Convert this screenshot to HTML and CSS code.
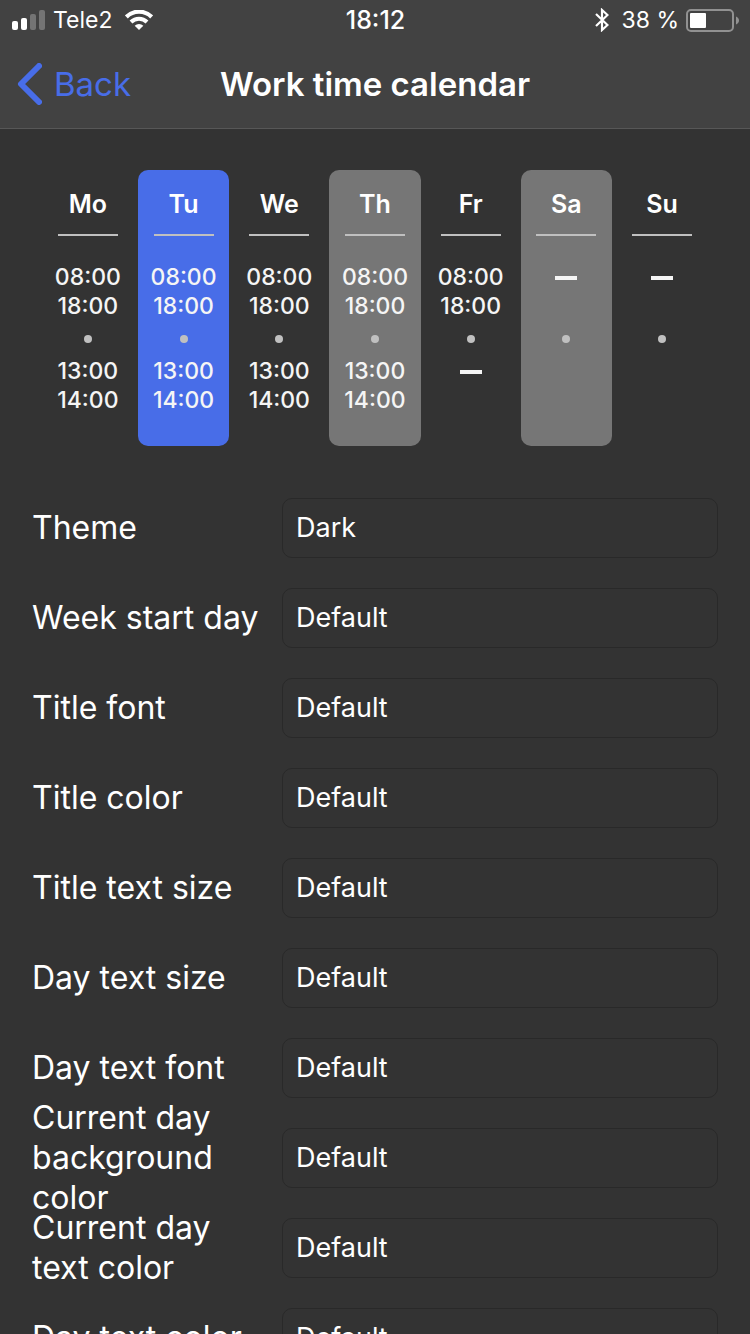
FILE: index.html
```html
<!DOCTYPE html>
<html lang="en">
<head>
<meta charset="utf-8">
<meta name="viewport" content="width=device-width, initial-scale=1">
<title>Work time calendar</title>
<link rel="stylesheet" href="styles.css">
</head>
<body>
<div class="app">
  <header class="header">
    <div class="status">
      <div class="status-side">
        <svg class="signal" viewBox="0 0 34 20" width="34" height="20" aria-hidden="true">
          <rect x="0" y="11" width="6" height="9" rx="2" fill="#fff"/>
          <rect x="9" y="8" width="6" height="12" rx="2" fill="#fff"/>
          <rect x="18" y="4" width="6" height="16" rx="2" fill="#747474"/>
          <rect x="27" y="0" width="6" height="20" rx="2" fill="#747474"/>
        </svg>
        <span class="carrier">Tele2</span>
        <svg class="wifi" viewBox="0 0 28 20" width="28" height="20" aria-hidden="true">
          <path d="M1.300 6.900a18 18 0 0 1 25.400 0" fill="none" stroke="#fff" stroke-width="4.200"/>
          <path d="M6 12a11.400 11.400 0 0 1 16 0" fill="none" stroke="#fff" stroke-width="4"/>
          <path d="M14 20l-4.300-4.300a6.100 6.100 0 0 1 8.600 0z" fill="#fff"/>
        </svg>
      </div>
      <time class="clock">18:12</time>
      <div class="status-side status-right">
        <svg class="bluetooth" viewBox="0 0 14 24" width="14" height="24" aria-hidden="true">
          <path d="M1 6l11.500 11-5.500 5V2L12.500 7 1 18" fill="none" stroke="#fff" stroke-width="2.200"/>
        </svg>
        <span>38 %</span>
        <svg class="battery" viewBox="0 0 53 24" width="53" height="24" aria-hidden="true">
          <rect x="1" y="2" width="46" height="21" rx="4" fill="none" stroke="#919191" stroke-width="2"/>
          <rect x="4" y="5" width="16" height="15" rx="1" fill="#fff"/>
          <path d="M50 8.500c4 1.500 4 6.500 0 8z" fill="#919191"/>
        </svg>
      </div>
    </div>
    <nav class="nav">
      <button class="back" type="button">
        <svg viewBox="0 0 25 42" width="25" height="42" aria-hidden="true">
          <path d="M22 3L4 21l18 18" fill="none" stroke="#486de8" stroke-width="6" stroke-linecap="round" stroke-linejoin="round"/>
        </svg>
        <span>Back</span>
      </button>
      <h1 class="title">Work time calendar</h1>
    </nav>
  </header>

  <main class="content">
    <section class="week" aria-label="Week preview">
      <div class="day">
        <h2 class="day-name">Mo</h2>
        <div class="slot">08:00<br>18:00</div>
        <span class="dot"></span>
        <div class="slot">13:00<br>14:00</div>
      </div>
      <div class="day day-current">
        <h2 class="day-name">Tu</h2>
        <div class="slot">08:00<br>18:00</div>
        <span class="dot"></span>
        <div class="slot">13:00<br>14:00</div>
      </div>
      <div class="day">
        <h2 class="day-name">We</h2>
        <div class="slot">08:00<br>18:00</div>
        <span class="dot"></span>
        <div class="slot">13:00<br>14:00</div>
      </div>
      <div class="day day-alt">
        <h2 class="day-name">Th</h2>
        <div class="slot">08:00<br>18:00</div>
        <span class="dot"></span>
        <div class="slot">13:00<br>14:00</div>
      </div>
      <div class="day">
        <h2 class="day-name">Fr</h2>
        <div class="slot">08:00<br>18:00</div>
        <span class="dot"></span>
        <div class="slot"><span class="dash"></span></div>
      </div>
      <div class="day day-alt">
        <h2 class="day-name">Sa</h2>
        <div class="slot"><span class="dash"></span></div>
        <span class="dot"></span>
        <div class="slot"></div>
      </div>
      <div class="day">
        <h2 class="day-name">Su</h2>
        <div class="slot"><span class="dash"></span></div>
        <span class="dot"></span>
        <div class="slot"></div>
      </div>
    </section>

    <form class="settings">
      <label class="label" for="theme">Theme</label>
      <select class="field" id="theme"><option>Dark</option></select>
      <label class="label" for="week-start">Week start day</label>
      <select class="field" id="week-start"><option>Default</option></select>
      <label class="label" for="title-font">Title font</label>
      <select class="field" id="title-font"><option>Default</option></select>
      <label class="label" for="title-color">Title color</label>
      <select class="field" id="title-color"><option>Default</option></select>
      <label class="label" for="title-size">Title text size</label>
      <select class="field" id="title-size"><option>Default</option></select>
      <label class="label" for="day-size">Day text size</label>
      <select class="field" id="day-size"><option>Default</option></select>
      <label class="label" for="day-font">Day text font</label>
      <select class="field" id="day-font"><option>Default</option></select>
      <label class="label" for="current-bg">Current day background color</label>
      <select class="field" id="current-bg"><option>Default</option></select>
      <label class="label" for="current-color">Current day text color</label>
      <select class="field" id="current-color"><option>Default</option></select>
      <label class="label" for="day-color">Day text color</label>
      <select class="field" id="day-color"><option>Default</option></select>
    </form>
  </main>
</div>
</body>
</html>
```

FILE: styles.css
```css
* {
  box-sizing: border-box;
}

body {
  margin: 0;
  background: #333;
  color: #fff;
  font-family: Inter, "Liberation Sans", sans-serif;
}

.app {
  display: flex;
  flex-direction: column;
  height: 100vh;
}

.header {
  background: #424242;
  border-bottom: 1px solid #575757;
}

.status {
  display: grid;
  grid-template-columns: 1fr auto 1fr;
  align-items: center;
  height: 40px;
  padding: 0 11px 0 12px;
  font-size: 23px;
}

.status-side {
  display: flex;
  align-items: center;
  gap: 7px;
}

.carrier {
  margin-right: 6px;
}

.status-right {
  justify-content: flex-end;
}

.bluetooth {
  margin-right: 6px;
}

.clock {
  font-size: 25px;
  font-weight: 500;
}

.nav {
  display: grid;
  grid-template-columns: 1fr auto 1fr;
  align-items: center;
  height: 88px;
  padding: 0 17px;
}

.back {
  display: flex;
  align-items: center;
  justify-self: start;
  gap: 12px;
  padding: 0;
  border: 0;
  background: none;
  color: #486de8;
  font: 400 33px/40px Inter, "Liberation Sans", sans-serif;
}

.title {
  margin: 0;
  font-size: 33px;
  font-weight: 600;
  line-height: 40px;
}

.content {
  flex: 1;
  min-height: 0;
  overflow-y: auto;
  scrollbar-width: none;
}

.week {
  display: grid;
  grid-template-columns: repeat(7, 1fr);
  gap: 4px;
  padding: 41px 42px 52px;
}

.day {
  display: flex;
  flex-direction: column;
  align-items: center;
  padding: 18px 0 31px;
  border-radius: 10px;
}

.day-current {
  background: #486de8;
}

.day-alt {
  background: #767676;
}

.day-name {
  width: 60px;
  margin: 0 0 27px;
  padding-bottom: 14px;
  border-bottom: 2px solid #c0c0c0;
  font-size: 25px;
  font-weight: 600;
  line-height: 32px;
  text-align: center;
}

.slot {
  height: 58px;
  color: #f5f5f5;
  font-size: 23px;
  font-weight: 500;
  line-height: 29px;
  text-align: center;
}

.dash {
  display: block;
  width: 22px;
  height: 4px;
  margin-top: 13px;
  background: #f5f5f5;
}

.dot {
  width: 8px;
  height: 8px;
  margin: 14px 0;
  border-radius: 50%;
  background: #c0c0c0;
}

/* Rows keep one height; long labels spill over evenly above and below. */
.settings {
  display: grid;
  grid-template-columns: 230px 1fr;
  grid-auto-rows: 60px;
  gap: 30px 20px;
  padding: 0 32px 30px;
}

.label {
  align-self: center;
  font-size: 32px;
  line-height: 40px;
}

.field {
  width: 100%;
  height: 60px;
  padding: 0 13px;
  border: 1px solid #292929;
  border-radius: 10px;
  background: transparent;
  color: #fff;
  font: 400 27px/34px Inter, "Liberation Sans", sans-serif;
  appearance: none;
}
```
